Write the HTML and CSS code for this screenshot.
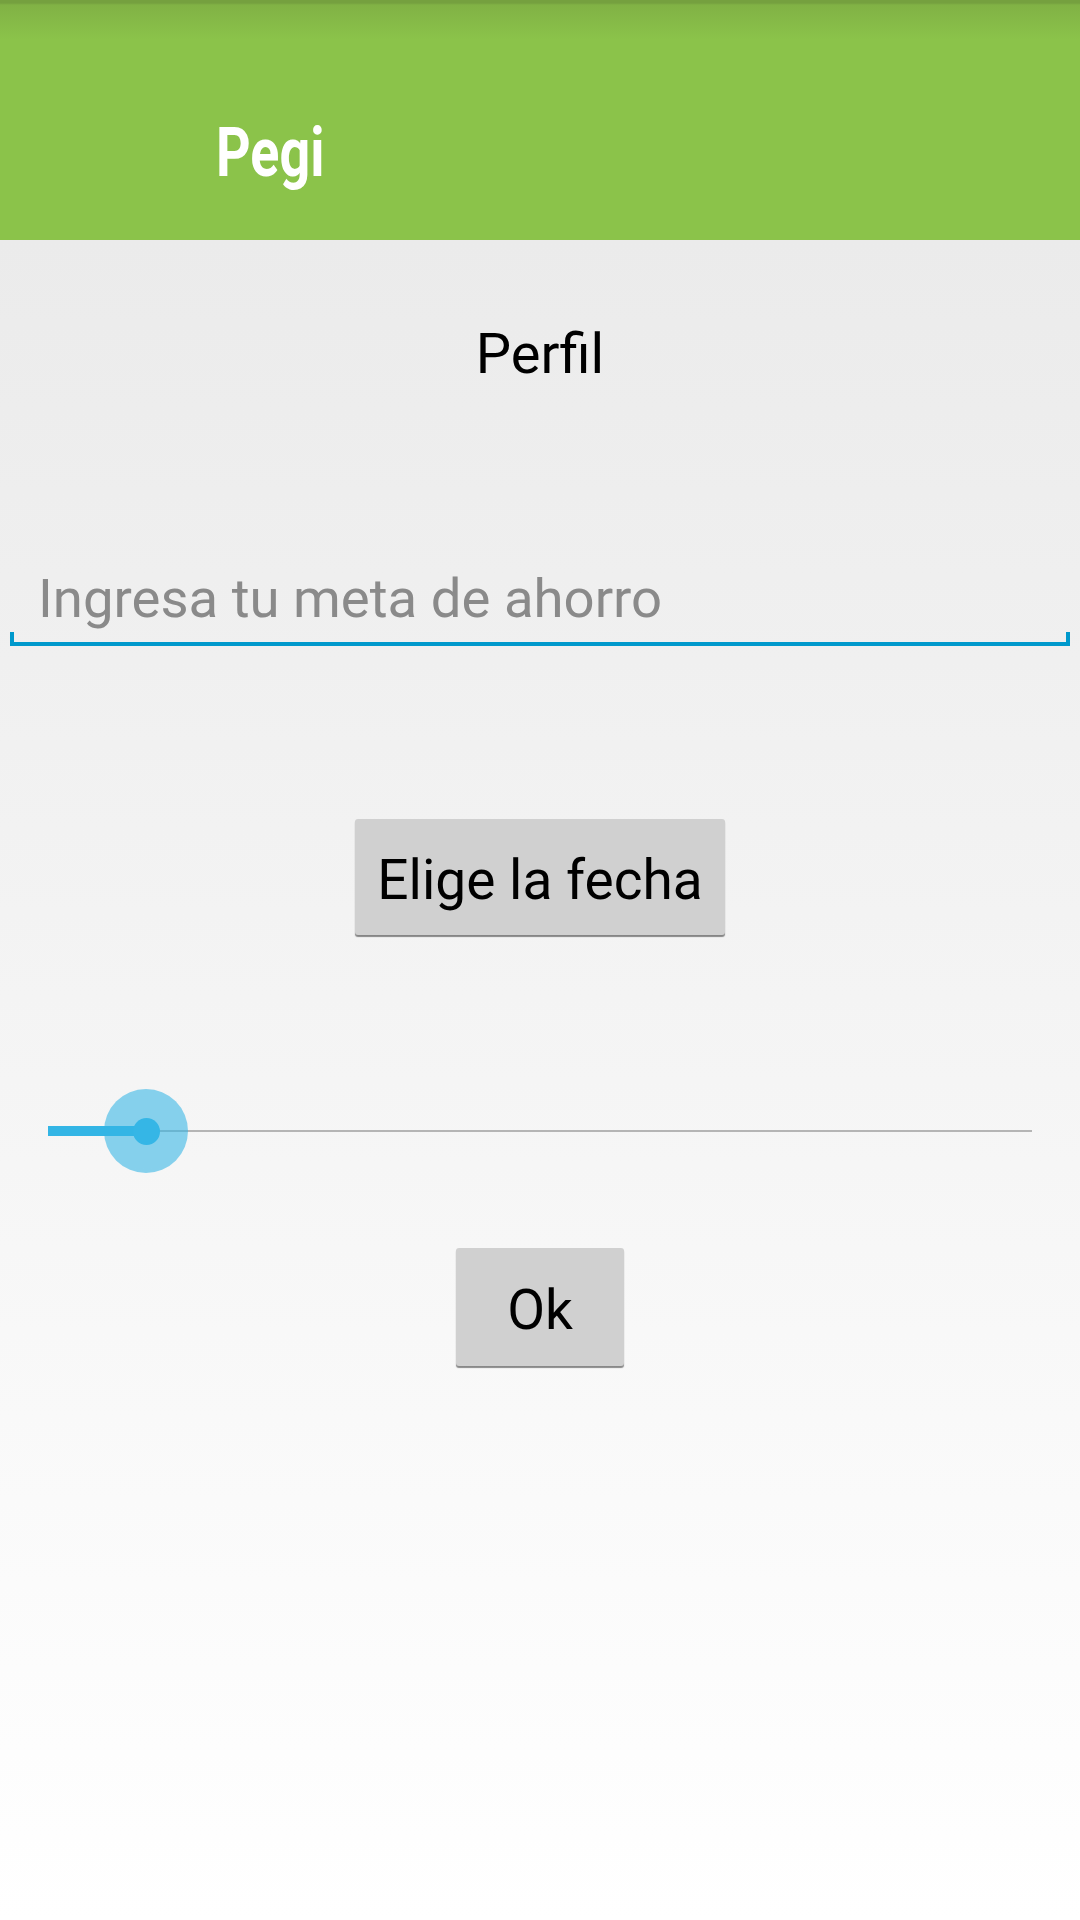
FILE: index.html
```html
<!DOCTYPE html>
<html lang="es">
<head>
<meta charset="utf-8">
<title>Pegi</title>
<link rel="stylesheet" href="styles.css">
</head>
<body>
<header class="appbar">
  <span class="logo">Pegi</span>
</header>
<main class="content">
  <div class="title">Perfil</div>
  <div class="field">
    <div class="hint">Ingresa tu meta de ahorro</div>
    <div class="underline"></div>
  </div>
  <div class="btn btn-date">Elige la fecha</div>
  <div class="slider">
    <div class="track"></div>
    <div class="progress"></div>
    <div class="halo"><div class="dot"></div></div>
  </div>
  <div class="btn btn-ok">Ok</div>
</main>
</body>
</html>
```

FILE: styles.css
```css
html, body {
  margin: 0;
  padding: 0;
}
body {
  width: 1080px;
  height: 1920px;
  font-family: Roboto, "Noto Sans", sans-serif;
  background: linear-gradient(#ebebeb 240px, #ffffff 1920px);
  display: flex;
  flex-direction: column;
  overflow: hidden;
}
.appbar {
  height: 240px;
  flex: none;
  box-sizing: border-box;
  padding: 113px 0 0 216px;
  background: linear-gradient(#75a03f 0, #75a03f 3px, #81b245 5px, #8bc34a 40px, #8bc34a 100%);
}
.logo {
  display: inline-block;
  font-family: Roboto, sans-serif;
  font-weight: 700;
  font-size: 69px;
  line-height: 80px;
  color: #ffffff;
  transform: scaleX(0.78);
  transform-origin: left center;
}
.content {
  flex: 1;
  display: flex;
  flex-direction: column;
  align-items: center;
}
.title {
  margin-top: 81px;
  font-size: 56px;
  line-height: 66px;
  color: #000000;
}
.field {
  align-self: stretch;
  margin: 178px 10px 0;
}
.hint {
  padding-left: 28px;
  font-size: 54.5px;
  line-height: 66px;
  color: #8a8a8a;
}
.underline {
  margin-top: 1px;
  height: 10px;
  border: 4px solid #0099cc;
  border-top: 0;
}
.btn {
  box-sizing: border-box;
  background: #d0d0d0;
  border-radius: 3px;
  box-shadow: 0 2px 1px rgba(0, 0, 0, 0.45);
  color: #000000;
  font-size: 55px;
  line-height: 66px;
  text-align: center;
}
.btn-date {
  margin-top: 173px;
  width: 370px;
  height: 116px;
  padding-top: 28px;
}
.slider {
  position: relative;
  margin-top: 154px;
  align-self: flex-start;
  margin-left: 48px;
  width: 984px;
  height: 84px;
}
.track {
  position: absolute;
  left: 0;
  right: 0;
  top: 41px;
  height: 2px;
  background: #b5b5b5;
}
.progress {
  position: absolute;
  left: 0;
  top: 37px;
  width: 98px;
  height: 10px;
  background: #33b5e5;
}
.halo {
  position: absolute;
  left: 56px;
  top: 0;
  width: 84px;
  height: 84px;
  border-radius: 50%;
  background: rgba(51, 181, 229, 0.58);
  display: flex;
  align-items: center;
  justify-content: center;
}
.dot {
  width: 27px;
  height: 27px;
  border-radius: 50%;
  background: #35b6e6;
}
.btn-ok {
  margin-top: 75px;
  width: 168px;
  height: 118px;
  padding-top: 29px;
}
```
